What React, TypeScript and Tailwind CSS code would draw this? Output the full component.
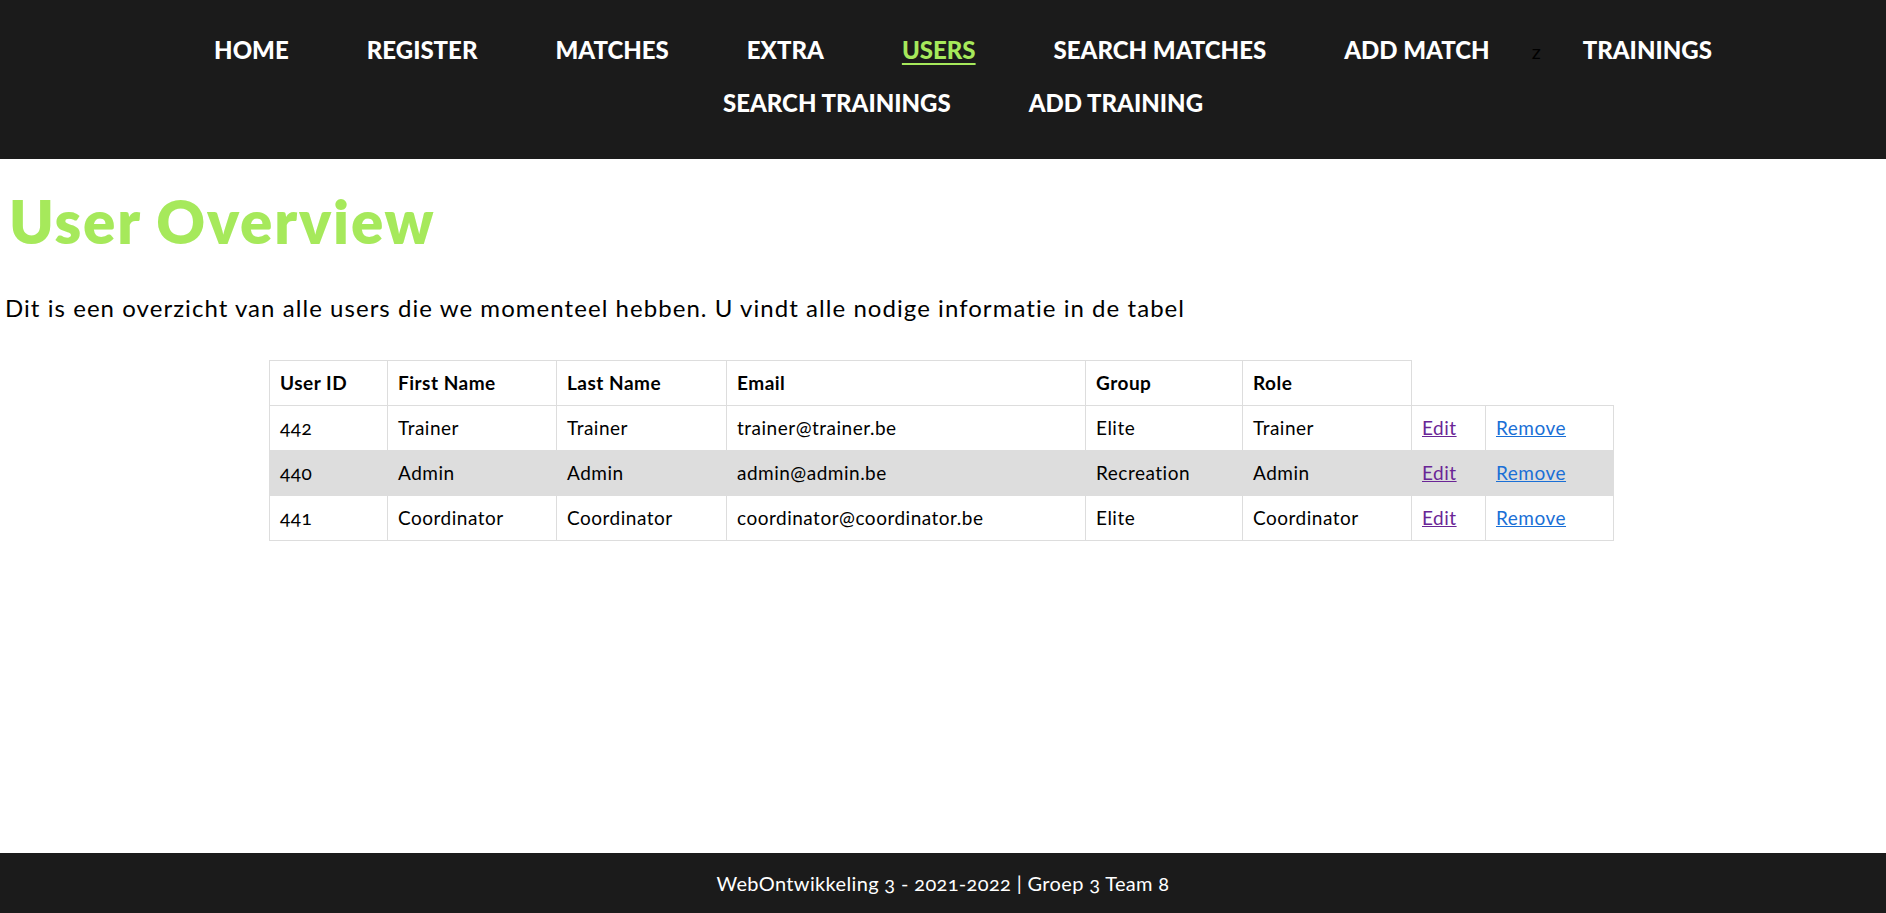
import React from 'react'

type User = {
  id: number
  first: string
  last: string
  email: string
  group: string
  role: string
}

const users: User[] = [
  { id: 442, first: 'Trainer', last: 'Trainer', email: 'trainer@trainer.be', group: 'Elite', role: 'Trainer' },
  { id: 440, first: 'Admin', last: 'Admin', email: 'admin@admin.be', group: 'Recreation', role: 'Admin' },
  { id: 441, first: 'Coordinator', last: 'Coordinator', email: 'coordinator@coordinator.be', group: 'Elite', role: 'Coordinator' },
]

const NavItem: React.FC<{ label: string; active?: boolean }> = ({ label, active }) => (
  <li className="px-[39px]">
    <a
      href="#"
      className={
        active
          ? 'text-[#a6e95b] underline decoration-2 underline-offset-4'
          : 'text-white no-underline'
      }
    >
      {label}
    </a>
  </li>
)

const App: React.FC = () => {
  return (
    <div className="h-screen flex flex-col font-['Lato',sans-serif] text-black bg-white overflow-hidden">
      <header className="bg-[#1b1b1b] h-[159px] pt-[23px] shrink-0">
        <ul className="pl-10 flex justify-center items-center font-black uppercase text-[24px] leading-[53px]">
          <NavItem label="Home" />
          <NavItem label="Register" />
          <NavItem label="Matches" />
          <NavItem label="Extra" />
          <NavItem label="Users" active />
          <NavItem label="Search Matches" />
          <NavItem label="Add Match" />
          <span className="text-[20px] font-normal normal-case text-black mx-[3px] translate-y-[2px]">z</span>
          <NavItem label="Trainings" />
        </ul>
        <ul className="pl-10 flex justify-center items-center font-black uppercase text-[24px] leading-[53px]">
          <NavItem label="Search Trainings" />
          <NavItem label="Add Training" />
        </ul>
      </header>

      <main className="flex-1 px-[5px]">
        <h1 className="mt-[26px] pl-[4px] text-[60px] leading-[72px] font-extrabold tracking-[1.8px] text-[#a6e95b]">
          User Overview
        </h1>
        <p className="mt-[36px] text-[24px] leading-[29px] tracking-[1.05px]">
          Dit is een overzicht van alle users die we momenteel hebben. U vindt alle nodige informatie in de tabel
        </p>

        <table className="mt-[38px] ml-[264px] w-[1344px] table-fixed border-collapse text-[19px] tracking-[0.5px] oldstyle-nums">
          <colgroup>
            <col className="w-[118px]" />
            <col className="w-[169px]" />
            <col className="w-[170px]" />
            <col className="w-[359px]" />
            <col className="w-[157px]" />
            <col className="w-[169px]" />
            <col className="w-[74px]" />
            <col className="w-[128px]" />
          </colgroup>
          <thead>
            <tr className="h-[45px]">
              {['User ID', 'First Name', 'Last Name', 'Email', 'Group', 'Role'].map((h) => (
                <th key={h} className="border border-[#dddddd] px-[10px] text-left font-bold">
                  {h}
                </th>
              ))}
            </tr>
          </thead>
          <tbody>
            {users.map((u, i) => (
              <tr key={u.id} className={i % 2 === 1 ? 'h-[45px] bg-[#dddddd]' : 'h-[45px]'}>
                <td className="border border-[#dddddd] px-[10px]">{u.id}</td>
                <td className="border border-[#dddddd] px-[10px]">{u.first}</td>
                <td className="border border-[#dddddd] px-[10px]">{u.last}</td>
                <td className="border border-[#dddddd] px-[10px]">{u.email}</td>
                <td className="border border-[#dddddd] px-[10px]">{u.group}</td>
                <td className="border border-[#dddddd] px-[10px]">{u.role}</td>
                <td className="border border-[#dddddd] px-[10px]">
                  <a href="#" className="text-[#6a2596] underline">Edit</a>
                </td>
                <td className="border border-[#dddddd] px-[10px]">
                  <a href="#" className="text-[#1a6fd6] underline">Remove</a>
                </td>
              </tr>
            ))}
          </tbody>
        </table>
      </main>

      <footer className="bg-[#1b1b1b] h-[60px] shrink-0 flex items-center justify-center">
        <p className="text-white text-[20px] tracking-[0.35px] oldstyle-nums">WebOntwikkeling 3 - 2021-2022 | Groep 3 Team 8</p>
      </footer>
    </div>
  )
}

export default App
